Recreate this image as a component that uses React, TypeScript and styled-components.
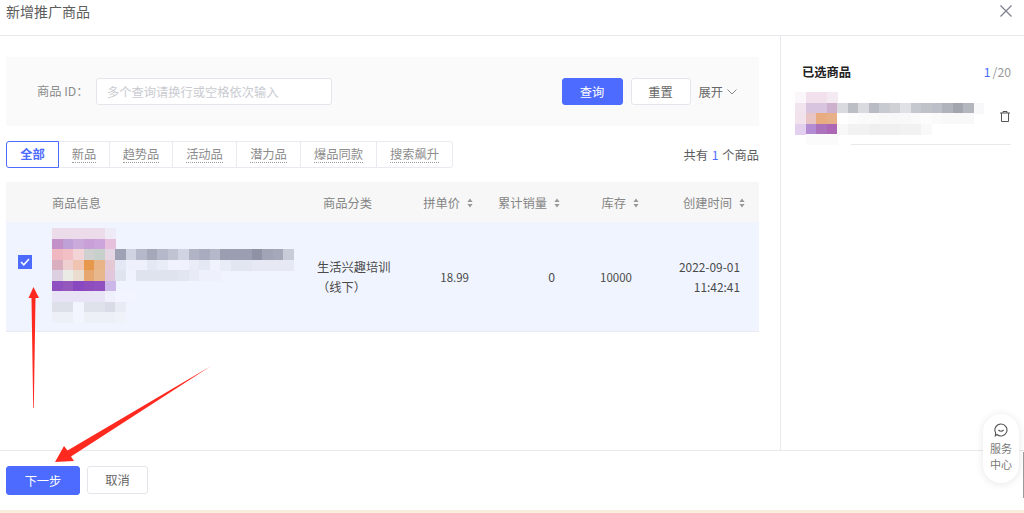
import React from 'react'
import styled, { createGlobalStyle } from 'styled-components'

const GlobalStyle = createGlobalStyle`
  html, body {
    margin: 0;
    height: 513px;
    overflow: hidden;
    background: #fff;
    font-family: "Noto Sans CJK SC", "Liberation Sans", sans-serif;
    font-size: 12.25px;
    color: #4a4a4a;
  }
  * { box-sizing: border-box; }
`

const Page = styled.div`
  position: relative;
  width: 1024px;
  height: 513px;
  display: flex;
  flex-direction: column;
  overflow: hidden;
`

const Header = styled.header`
  height: 36px;
  flex: none;
  padding: 0 12px 0 6px;
  border-bottom: 1px solid #e8e9ec;
  display: flex;
  justify-content: space-between;
  align-items: flex-start;
`

const Title = styled.div`
  font-size: 14px;
  line-height: 22px;
  color: #5c5c5c;
`

const CloseButton = styled.div`
  color: #7b7f8c;
  height: 22px;
  display: flex;
  align-items: center;
`

const Body = styled.div`
  height: 414px;
  flex: none;
  display: flex;
`

const Main = styled.main`
  width: 781px;
  flex: none;
  padding: 21px 21px 0 6px;
  border-right: 1px solid #e8e9ec;
`

const SearchPanel = styled.div`
  height: 69px;
  background: #fafafa;
  padding: 21px 22px 0 31px;
  display: flex;
  align-items: flex-start;
`

const FieldLabel = styled.label`
  width: 59px;
  flex: none;
  line-height: 27px;
  color: #8c8c8c;
`

const TextInput = styled.input`
  width: 236px;
  height: 27px;
  padding: 0 10px;
  border: 1px solid #e4e6ec;
  border-radius: 3px;
  background: #fff;
  font: inherit;
  outline: none;

  &::placeholder {
    color: #c9cbd1;
    opacity: 1;
  }
`

const Actions = styled.div`
  margin-left: auto;
  display: flex;
  align-items: center;
`

const Button = styled.button<{ $primary?: boolean; $width: number; $height?: number }>`
  width: ${p => p.$width}px;
  height: ${p => p.$height ?? 27}px;
  padding: 0;
  border-radius: 3px;
  font: inherit;
  border: 1px solid ${p => (p.$primary ? '#4d6bff' : '#e4e6ec')};
  background: ${p => (p.$primary ? '#4d6bff' : '#fff')};
  color: ${p => (p.$primary ? '#fff' : '#666')};
`

const ActionGap = styled.div`
  width: 8px;
`

const Expand = styled.div`
  margin-left: 8px;
  display: flex;
  align-items: center;
  gap: 4px;
  color: #666;
`

const TabRow = styled.div`
  margin-top: 15px;
  height: 27px;
  display: flex;
  justify-content: space-between;
  align-items: center;
`

const Tabs = styled.div`
  display: flex;
`

const Tab = styled.div<{ $active?: boolean; $width: number }>`
  width: ${p => p.$width}px;
  height: 27px;
  display: flex;
  align-items: center;
  justify-content: center;
  margin-left: -1px;
  background: #fff;
  border: 1px solid ${p => (p.$active ? '#4d6bff' : '#e9eaef')};
  color: ${p => (p.$active ? '#4d6bff' : '#8c8c8c')};
  font-weight: ${p => (p.$active ? 700 : 400)};
  border-radius: ${p => (p.$active ? '3px 0 0 3px' : '0')};
  position: ${p => (p.$active ? 'relative' : 'static')};

  &:first-child {
    margin-left: 0;
  }
  &:last-child {
    border-radius: 0 3px 3px 0;
  }

  > span {
    border-bottom: ${p => (p.$active ? 'none' : '1px dotted #999')};
    line-height: 15px;
  }
`

const Total = styled.div`
  color: #5c5c5c;

  em {
    font-style: normal;
    color: #4d6bff;
    margin: 0 1px;
  }
`

const columns = '46px 265px 93px 70px 90px 90px 99px'

const TableHead = styled.div`
  margin-top: 14px;
  height: 40px;
  padding-top: 1px;
  background: #f7f7f7;
  display: grid;
  grid-template-columns: ${columns};
  align-items: center;
  color: #858585;
`

const HeadCell = styled.div<{ $right?: number; $left?: number }>`
  display: flex;
  align-items: center;
  justify-content: ${p => (p.$right !== undefined ? 'flex-end' : 'flex-start')};
  gap: 7px;
  padding-left: ${p => p.$left ?? 0}px;
  padding-right: ${p => p.$right ?? 0}px;
`

const TableRow = styled.div`
  height: 110px;
  background: #f0f4ff;
  border-bottom: 1px solid #e8eaf0;
  display: grid;
  grid-template-columns: ${columns};
  align-items: center;
  color: #4a4a4a;
`

const CheckCell = styled.div`
  padding-left: 12px;
  margin-top: -30px;
  display: flex;
`

const CheckBox = styled.div`
  width: 14px;
  height: 14px;
  background: #4d6bff;
  display: flex;
  align-items: center;
  justify-content: center;
`

const InfoCell = styled.div`
  align-self: start;
  padding-top: 6px;
`

const Cell = styled.div<{ $right?: number; $size?: number }>`
  text-align: ${p => (p.$right !== undefined ? 'right' : 'left')};
  padding-right: ${p => p.$right ?? 0}px;
  line-height: 20px;
  font-size: ${p => (p.$size ? `${p.$size}px` : 'inherit')};
`

const Side = styled.aside`
  flex: 1;
  padding: 25px 13px 0 14px;
`

const SideHead = styled.div`
  display: flex;
  justify-content: space-between;
  align-items: center;
  line-height: 22px;
  padding-left: 7px;
`

const SideTitle = styled.div`
  font-weight: 700;
  color: #222;
`

const Count = styled.div`
  color: #999;

  em {
    font-style: normal;
    color: #4d6bff;
    margin-right: 2px;
  }
`

const SelectedItem = styled.div`
  margin-top: 9px;
  height: 52px;
  display: flex;
  justify-content: space-between;
  align-items: flex-start;
`

const TrashWrap = styled.div`
  margin-top: 19px;
  margin-right: 1px;
  color: #555;
  display: flex;
`

const SideDivider = styled.div`
  margin-left: 56px;
  height: 1px;
  background: #e8e9ec;
`

const Footer = styled.footer`
  height: 60px;
  flex: none;
  border-top: 1px solid #e8e9ec;
  padding: 15px 0 0 6px;
  display: flex;
  align-items: flex-start;
  gap: 7px;
`

const Stripe = styled.div`
  flex: 1;
  background: #faeedd;
`

const ServicePill = styled.div`
  position: absolute;
  left: 983px;
  top: 414px;
  width: 36px;
  height: 69px;
  border-radius: 18px;
  background: #fff;
  box-shadow: 0 1px 8px rgba(0, 0, 0, 0.1);
  padding-top: 9px;
  display: flex;
  flex-direction: column;
  align-items: center;
  color: #777;
  font-size: 11px;
  line-height: 16px;
  text-align: center;
`

const ServiceText = styled.div`
  margin-top: 3px;
`

const EdgeLine = styled.div`
  position: absolute;
  left: 1023px;
  top: 452px;
  width: 1px;
  height: 46px;
  background: #9a9a9a;
`

const Arrows = styled.svg`
  position: absolute;
  left: 0;
  top: 0;
  pointer-events: none;
`

const MosaicSvg = styled.svg`
  display: block;
`

const SortIcon = () => (
  <svg width="6" height="10" viewBox="0 0 6 10">
    <path d="M3 0.5 L5.6 4 H0.4 Z M3 9.5 L0.4 6 H5.6 Z" fill="#999" />
  </svg>
)

// blurred-out product pictures, drawn as colour cells
const Mosaic = ({ rows, cell }: { rows: string[][]; cell: number }) => (
  <MosaicSvg
    width={Math.max(...rows.map(r => r.length)) * cell}
    height={rows.length * cell}
    shapeRendering="crispEdges"
  >
    {rows.map((row, y) =>
      row.map((color, x) =>
        color ? (
          <rect key={`${x}-${y}`} x={x * cell} y={y * cell} width={cell + 0.5} height={cell + 0.5} fill={color} />
        ) : null,
      ),
    )}
  </MosaicSvg>
)

const productCells: string[][] = [
  ['#ecdbe8', '#ecdbe8', '#ecdbe8', '#ecdbe8', '#ecdbe8', '#eeeaf6'],
  ['#c490c9', '#bfa1d8', '#c9aadb', '#c9a0d8', '#cba5dc', '#e6c0dc'],
  ['#efb8c0', '#f2c0c4', '#f2d3d6', '#d0d0d0', '#c8d0cc', '#e6d6e4', '#9fa2b4', '#d0d4e2', '#b4b8c8', '#a4a8b8', '#b4b8c8', '#c0c4d2', '#d0d4e2', '#b0b4c4', '#a8acbe', '#b4b8c8', '#9a9eb0', '#9a9eb0', '#9a9eb0', '#8e92a4', '#a0a4b4', '#a4a8b8', '#c8ccd8'],
  ['#d9afc0', '#eed0d0', '#f0c4b0', '#e8984c', '#e8b488', '#e6c8d4', '#e4e8f4', '#eef1fb', '#eef1fb', '#e4e8f4', '#e8ecf6', '#f0f3fd', '#f0f3fd', '#eaedf8', '#e4e8f4', '#f0f3fd', '#e8ecf6', '#e2e6f0', '#e2e6f0', '#e6e9f4', '#e6e9f4', '#e6e9f4', '#e6e9f4'],
  ['#dccfe0', '#ebebe6', '#ebdcd0', '#e6a870', '#e8b88c', '#e0c8da', '#e0e4ee', '#f0f3fd', '#dfe3ee', '#dfe3ee', '#dfe3ee', '#dfe3ee', '#e2e6f0', '#e8ebf6', '#eef1fb', '#eef1fb'],
  ['#8f50c0', '#9458bc', '#8a48c0', '#8e4cbc', '#9050c0', '#cbb8e8'],
  ['#e8e4f6', '#e8e4f6', '#e8e4f6', '#e8e4f6', '#e8e4f6', '#f0f0fc', '#f2f5ff', '#f2f5ff'],
  ['#dde0e8', '#dde0e8', '#f2f4fe', '#dfe2ea', '#dfe2ea', '#d9dce6', '#e8eaf4'],
  ['#eef0f8', '#eef0f8', '#f2f4fe', '#eef0f8', '#eef0f8', '#eef0f8', '#f0f2fa'],
]

const selectedCells: string[][] = [
  ['#fbf6fa', '#f2e0ec', '#f2e0ec', '#f4eaf2'],
  ['#f2e4ee', '#d8c4de', '#d8c4de', '#ccb0cc', '#d8dae0', '#bcbec6', '#d8dae0', '#b8bac4', '#c8cad2', '#ced0d6', '#dfe1e6', '#c6c8d0', '#c0c2ca', '#bcbec8', '#b0b2bc', '#a2a4ae', '#b4b6be', '#f8f8fa'],
  ['#f2e2ec', '#e8c4c4', '#e8ac80', '#e8b088', '#ffffff', '#fcfcfc', '#fafafa', '#fafafa', '#f8f8f8', '#f8f8f8', '#f8f8f8', '#fafafa', '#fcfcfc', '#fafafa', '#f8f8f8', '#f8f8f8', '#f8f8f8'],
  ['#e2d0ee', '#b48cd4', '#ac72bc', '#ac68b4', '#f8f8f8', '#f2f2f2', '#f2f2f2', '#efefef', '#f0f0f0', '#f0f0f0', '#f2f2f2', '#f2f2f2', '#f9f9f9'],
  ['', '#fbfbfb', '#fbfbfb', '#fbfbfb'],
]

const tabs = [
  { label: '全部', width: 53 },
  { label: '新品', width: 52 },
  { label: '趋势品', width: 64 },
  { label: '活动品', width: 65 },
  { label: '潜力品', width: 65 },
  { label: '爆品同款', width: 77 },
  { label: '搜索飙升', width: 77 },
]

const App: React.FC = () => {
  return (
    <Page>
      <GlobalStyle />
      <Header>
        <Title>新增推广商品</Title>
        <CloseButton>
          <svg width="12" height="12" viewBox="0 0 12 12" fill="none" stroke="currentColor" strokeWidth="1.2">
            <path d="M0.5 0.5 L11.5 11.5 M11.5 0.5 L0.5 11.5" />
          </svg>
        </CloseButton>
      </Header>

      <Body>
        <Main>
          <SearchPanel>
            <FieldLabel>商品 ID：</FieldLabel>
            <TextInput placeholder="多个查询请换行或空格依次输入" />
            <Actions>
              <Button $primary $width={61}>查询</Button>
              <ActionGap />
              <Button $width={60}>重置</Button>
              <Expand>
                展开
                <svg width="10" height="6" viewBox="0 0 10 6" fill="none" stroke="#888" strokeWidth="1">
                  <path d="M0.5 0.5 L5 5 L9.5 0.5" />
                </svg>
              </Expand>
            </Actions>
          </SearchPanel>

          <TabRow>
            <Tabs>
              {tabs.map((tab, i) => (
                <Tab key={tab.label} $active={i === 0} $width={tab.width}>
                  <span>{tab.label}</span>
                </Tab>
              ))}
            </Tabs>
            <Total>共有<em> 1 </em>个商品</Total>
          </TabRow>

          <TableHead>
            <div />
            <HeadCell>商品信息</HeadCell>
            <HeadCell $left={6}>商品分类</HeadCell>
            <HeadCell $right={7}>拼单价 <SortIcon /></HeadCell>
            <HeadCell $right={10}>累计销量 <SortIcon /></HeadCell>
            <HeadCell $right={21}>库存 <SortIcon /></HeadCell>
            <HeadCell $right={14}>创建时间 <SortIcon /></HeadCell>
          </TableHead>

          <TableRow>
            <CheckCell>
              <CheckBox>
                <svg width="10" height="8" viewBox="0 0 10 8" fill="none" stroke="#fff" strokeWidth="1.6">
                  <path d="M1 4 L3.8 6.8 L9 1" />
                </svg>
              </CheckBox>
            </CheckCell>
            <InfoCell>
              <Mosaic rows={productCells} cell={10.5} />
            </InfoCell>
            <Cell>生活兴趣培训<br />（线下）</Cell>
            <Cell $right={11} $size={11.5}>18.99</Cell>
            <Cell $right={15}>0</Cell>
            <Cell $right={28} $size={11.5}>10000</Cell>
            <Cell $right={19} $size={11.9}>2022-09-01<br />11:42:41</Cell>
          </TableRow>
        </Main>

        <Side>
          <SideHead>
            <SideTitle>已选商品</SideTitle>
            <Count><em>1</em>/20</Count>
          </SideHead>
          <SelectedItem>
            <Mosaic rows={selectedCells} cell={10.5} />
            <TrashWrap>
              <svg width="10" height="11" viewBox="0 0 10 11" fill="none" stroke="currentColor" strokeWidth="1">
                <path d="M0 2 H10 M3 2 V0.5 H7 V2 M1.5 2 V10.5 H8.5 V2" />
              </svg>
            </TrashWrap>
          </SelectedItem>
          <SideDivider />
        </Side>
      </Body>

      <Footer>
        <Button $primary $width={74} $height={29}>下一步</Button>
        <Button $width={61} $height={28}>取消</Button>
      </Footer>
      <Stripe />

      <ServicePill>
        <svg width="14" height="14" viewBox="0 0 14 14" fill="none" stroke="#555" strokeWidth="1.1">
          <path d="M7 1 A6 6 0 1 1 3 11.5 L1.4 12.8 L1.6 9.8 A6 6 0 0 1 7 1 Z" />
          <path d="M4.4 7 Q7 9.6 9.6 7" />
        </svg>
        <ServiceText>服务<br />中心</ServiceText>
      </ServicePill>
      <EdgeLine />

      <Arrows width="1024" height="513" viewBox="0 0 1024 513">
        <polygon points="33.5,287 39,298 35.5,298 33.8,408 33.2,408 31.5,298 28.5,298" fill="#ff2a1f" />
        <polygon points="211,366 71,456.5 74,461 55,462 64,446 67.5,450.5" fill="#ff2a1f" />
      </Arrows>
    </Page>
  )
}

export default App
